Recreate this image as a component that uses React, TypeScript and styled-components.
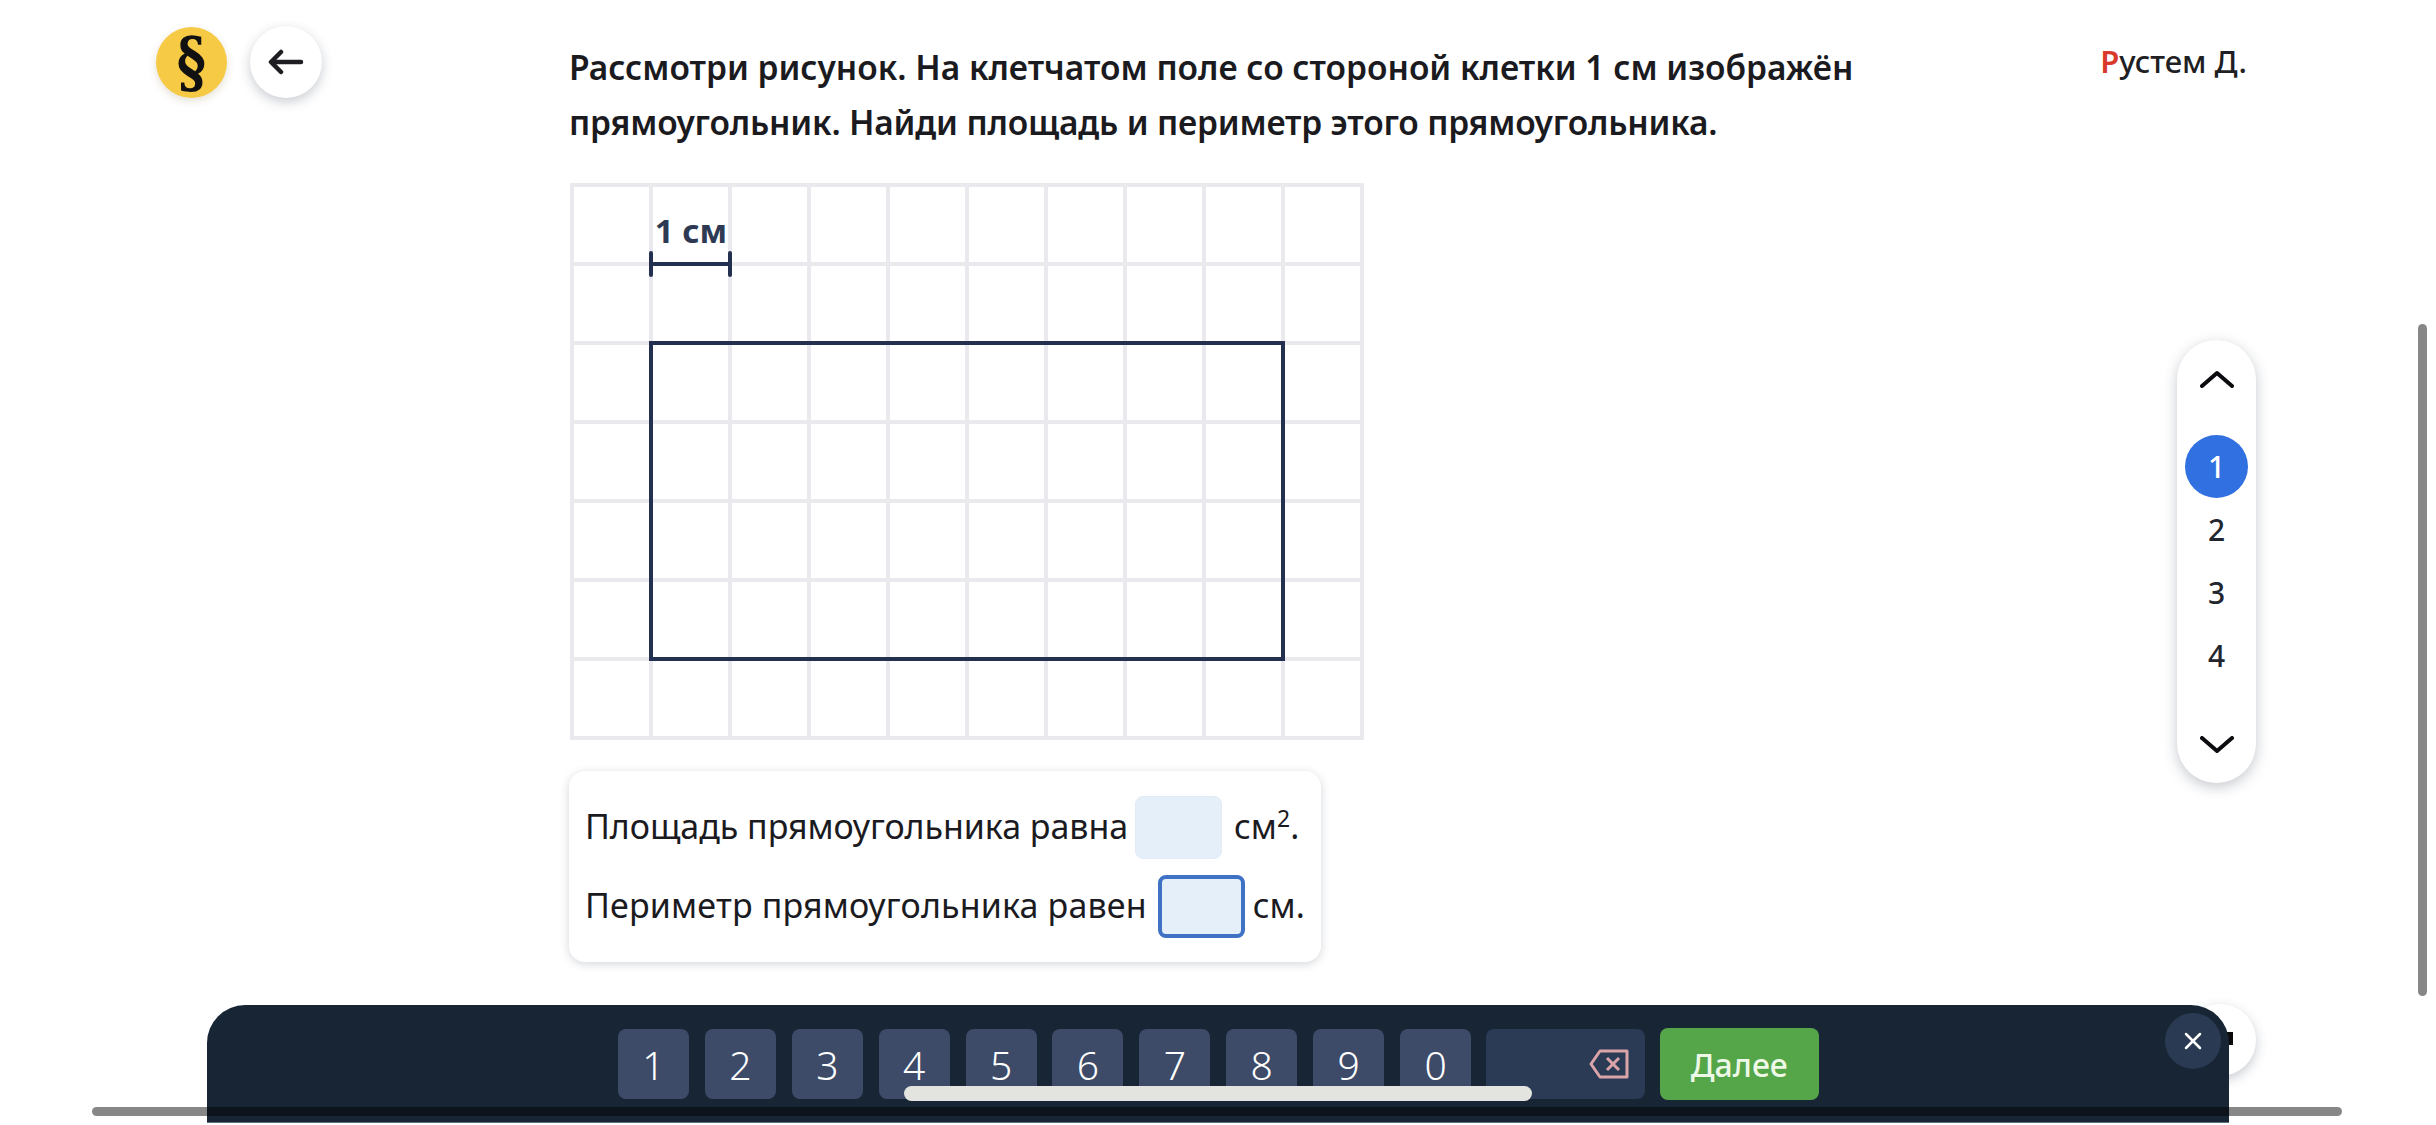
import React from "react";
import styled, { createGlobalStyle } from "styled-components";

const Global = createGlobalStyle`
  html, body { margin: 0; padding: 0; background: #fff; }
  body { font-family: "Noto Sans", "Open Sans", sans-serif; color: #1b1b1f; overflow: hidden; }
`;

const Page = styled.div`
  position: relative;
  width: 2436px;
  height: 1125px;
  overflow: hidden;
  box-sizing: border-box;
  padding: 26px 180px 0 156px;
  display: grid;
  grid-template-columns: 413px 1fr auto;
  align-items: start;
  background: #fff;
`;

const LeftTools = styled.div`
  display: flex;
  align-items: center;
  gap: 23px;
`;

const Logo = styled.div`
  width: 71px;
  height: 71px;
  border-radius: 50%;
  background: #f6ca45;
  box-shadow: 0 3px 8px rgba(120, 100, 40, 0.2);
  display: flex;
  align-items: center;
  justify-content: center;
  font-family: "DejaVu Serif", "Liberation Serif", serif;
  font-weight: 700;
  font-size: 56px;
  line-height: 1;
  color: #111;
`;

const LogoMark = styled.span`
  display: block;
  transform: scaleY(1.2);
`;

const RoundButton = styled.div`
  width: 72px;
  height: 72px;
  border-radius: 50%;
  background: #fff;
  box-shadow: 0 4px 12px rgba(40, 50, 75, 0.25);
  display: flex;
  align-items: center;
  justify-content: center;
`;

const Main = styled.main`
  display: flex;
  flex-direction: column;
  align-items: flex-start;
`;

const Question = styled.h1`
  margin: 14px 0 0;
  width: 1320px;
  font-size: 33.5px;
  line-height: 54.5px;
  font-weight: 600;
  color: #1b1b1f;
`;

const QuestionLine = styled.span<{ $tracking?: number }>`
  display: block;
  letter-spacing: ${(p) => p.$tracking ?? 0}px;
`;

const Figure = styled.svg`
  display: block;
  margin: 34px 0 0 1px;
`;

const AnswerCard = styled.section`
  margin-top: 31px;
  box-sizing: border-box;
  width: 752px;
  height: 191px;
  padding: 25px 0 0 16px;
  border-radius: 16px;
  background: #fff;
  box-shadow: 0 2px 10px rgba(40, 50, 75, 0.2);
  display: flex;
  flex-direction: column;
  gap: 16px;
`;

const AnswerRow = styled.div`
  display: flex;
  align-items: center;
  height: 63px;
  font-size: 34px;
  color: #1b1b1f;
  white-space: nowrap;
`;

const Label = styled.span<{ $tracking?: number }>`
  margin-bottom: 4px;
  letter-spacing: ${(p) => p.$tracking ?? 0}px;
`;

const Sup = styled.sup`
  font-size: 23px;
  line-height: 0;
  vertical-align: 12px;
`;

const Field = styled.span<{ $active?: boolean; $left: number; $right: number }>`
  box-sizing: border-box;
  width: 87px;
  height: 63px;
  margin: 0 ${(p) => p.$right}px 0 ${(p) => p.$left}px;
  border-radius: 8px;
  background: #e5effa;
  border: ${(p) => (p.$active ? "4px solid #3f72c4" : "1px solid #e3ecf6")};
`;

const RightColumn = styled.aside`
  display: flex;
  flex-direction: column;
  align-items: flex-end;
`;

const UserName = styled.div`
  margin: 14px 9px 0 0;
  font-size: 31px;
  line-height: 42px;
  font-weight: 500;
  color: #1f1f24;
`;

const Initial = styled.span`
  color: #d93a2b;
  font-weight: 600;
`;

const Rail = styled.nav`
  margin-top: 258px;
  box-sizing: border-box;
  width: 79px;
  height: 443px;
  padding: 30px 0 29px;
  border-radius: 40px;
  background: #fff;
  box-shadow: 0 4px 14px rgba(40, 50, 75, 0.27);
  display: flex;
  flex-direction: column;
  align-items: center;
`;

const RailArrow = styled.svg<{ $down?: boolean }>`
  display: block;
  margin-top: ${(p) => (p.$down ? "auto" : "0")};
  margin-bottom: ${(p) => (p.$down ? "0" : "47px")};
`;

const RailItem = styled.div<{ $active?: boolean }>`
  width: 63px;
  height: 63px;
  border-radius: 50%;
  display: flex;
  align-items: center;
  justify-content: center;
  font-size: 30px;
  font-weight: 500;
  color: ${(p) => (p.$active ? "#fff" : "#23262e")};
  background: ${(p) => (p.$active ? "#3070e0" : "transparent")};
`;

const Fab = styled(RoundButton)`
  position: absolute;
  left: 2184px;
  top: 1004px;
  z-index: 1;
`;

const FabGlyph = styled.span`
  position: absolute;
  left: 43px;
  top: 28px;
  width: 6px;
  height: 13px;
  background: #0a0a0a;
`;

const Keyboard = styled.div`
  position: absolute;
  left: 207px;
  top: 1005px;
  z-index: 2;
  box-sizing: border-box;
  width: 2022px;
  height: 118px;
  padding: 24px 0 0 411px;
  border-radius: 38px 38px 0 0;
  background: #172534;
  border-bottom: 1px solid #5f6f7c;
  display: flex;
  align-items: flex-start;
  gap: 15.9px;
`;

const Key = styled.div`
  width: 71px;
  height: 70px;
  border-radius: 8px;
  background: #3d4b68;
  display: flex;
  align-items: center;
  justify-content: center;
  font-size: 39px;
  font-weight: 300;
  color: #fff;
`;

const BackspaceKey = styled.div`
  box-sizing: border-box;
  width: 159px;
  height: 70px;
  margin-left: -1px;
  padding-right: 16px;
  border-radius: 8px;
  background: #2b3a55;
  display: flex;
  align-items: center;
  justify-content: flex-end;
`;

const NextButton = styled.div`
  width: 159px;
  height: 72px;
  margin: -1px 0 0 -1px;
  border-radius: 8px;
  background: #55a549;
  display: flex;
  align-items: center;
  justify-content: center;
  font-size: 32px;
  font-weight: 500;
  color: #eef8e6;
`;

const CloseButton = styled.div`
  position: absolute;
  left: 1958px;
  top: 8px;
  width: 56px;
  height: 56px;
  border-radius: 50%;
  background: #2a3a52;
  display: flex;
  align-items: center;
  justify-content: center;
`;

const ScrollThumb = styled.div<{ $vertical?: boolean }>`
  position: absolute;
  z-index: 3;
  background: rgba(0, 0, 0, 0.47);
  border-radius: 5px;
  ${(p) =>
    p.$vertical
      ? "left: 2418px; top: 324px; width: 9px; height: 672px;"
      : "left: 92px; top: 1107px; width: 2250px; height: 9px;"}
`;

const HomeIndicator = styled.div`
  position: absolute;
  z-index: 4;
  left: 904px;
  top: 1086px;
  width: 628px;
  height: 15px;
  border-radius: 8px;
  background: #e3e3e0;
`;

const CELL = 79;
const OFFSET = 2;
const at = (n: number) => OFFSET + CELL * n;
const INK = "#23304f";

const RectFigure = () => (
  <Figure width={794} height={557} viewBox="0 0 794 557">
    {Array.from({ length: 11 }, (_, i) => (
      <line key={`v${i}`} x1={at(i)} x2={at(i)} y1={0} y2={557} stroke="#e9e9ee" strokeWidth={4} />
    ))}
    {Array.from({ length: 8 }, (_, i) => (
      <line key={`h${i}`} x1={0} x2={794} y1={at(i)} y2={at(i)} stroke="#e9e9ee" strokeWidth={4} />
    ))}
    <rect x={at(1)} y={at(2)} width={CELL * 8} height={CELL * 4} fill="none" stroke={INK} strokeWidth={4} />
    <path
      d={`M${at(1)} ${at(1)}H${at(2)}M${at(1)} ${at(1) - 11}v22M${at(2)} ${at(1) - 11}v22`}
      fill="none"
      stroke={INK}
      strokeWidth={4}
      strokeLinecap="round"
    />
    <text x={121} y={60} textAnchor="middle" fontFamily="'Noto Sans', sans-serif" fontWeight={700} fontSize={33} fill="#2e3954">
      1 см
    </text>
  </Figure>
);

const Chevron = ({ up }: { up?: boolean }) => (
  <RailArrow $down={!up} width={34} height={18} viewBox="0 0 34 18">
    <path
      d={up ? "M2 16 L17 3 L32 16" : "M2 2 L17 15 L32 2"}
      fill="none"
      stroke="#0c0c10"
      strokeWidth={4}
      strokeLinecap="round"
      strokeLinejoin="round"
    />
  </RailArrow>
);

export default function App() {
  return (
    <Page>
      <Global />
      <LeftTools>
        <Logo>
          <LogoMark>§</LogoMark>
        </Logo>
        <RoundButton>
          <svg width="36" height="26" viewBox="0 0 36 26">
            <path
              d="M33 13H4M13 3L3 13L13 23"
              fill="none"
              stroke="#1d1d22"
              strokeWidth="4.5"
              strokeLinecap="round"
              strokeLinejoin="round"
            />
          </svg>
        </RoundButton>
      </LeftTools>

      <Main>
        <Question>
          <QuestionLine>Рассмотри рисунок. На клетчатом поле со стороной клетки 1 см изображён</QuestionLine>
          <QuestionLine $tracking={-0.18}>прямоугольник. Найди площадь и периметр этого прямоугольника.</QuestionLine>
        </Question>
        <RectFigure />
        <AnswerCard>
          <AnswerRow>
            <Label $tracking={-0.05}>Площадь прямоугольника равна</Label>
            <Field $left={7} $right={12} />
            <Label>
              см<Sup>2</Sup>.
            </Label>
          </AnswerRow>
          <AnswerRow>
            <Label $tracking={0.16}>Периметр прямоугольника равен</Label>
            <Field $active $left={11} $right={8} />
            <Label>см.</Label>
          </AnswerRow>
        </AnswerCard>
      </Main>

      <RightColumn>
        <UserName>
          <Initial>Р</Initial>устем Д.
        </UserName>
        <Rail>
          <Chevron up />
          <RailItem $active>1</RailItem>
          <RailItem>2</RailItem>
          <RailItem>3</RailItem>
          <RailItem>4</RailItem>
          <Chevron />
        </Rail>
      </RightColumn>

      <Fab>
        <FabGlyph />
      </Fab>

      <Keyboard>
        {["1", "2", "3", "4", "5", "6", "7", "8", "9", "0"].map((d) => (
          <Key key={d}>{d}</Key>
        ))}
        <BackspaceKey>
          <svg width="40" height="30" viewBox="0 0 40 30">
            <path
              d="M11 2H38V28H11L2 15Z M18 9L30 21M30 9L18 21"
              fill="none"
              stroke="#d9a5a8"
              strokeWidth="3"
              strokeLinejoin="round"
            />
          </svg>
        </BackspaceKey>
        <NextButton>Далее</NextButton>
        <CloseButton>
          <svg width="20" height="20" viewBox="0 0 20 20">
            <path d="M3 3L17 17M17 3L3 17" stroke="#fff" strokeWidth="2.5" strokeLinecap="round" />
          </svg>
        </CloseButton>
      </Keyboard>

      <ScrollThumb />
      <ScrollThumb $vertical />
      <HomeIndicator />
    </Page>
  );
}
